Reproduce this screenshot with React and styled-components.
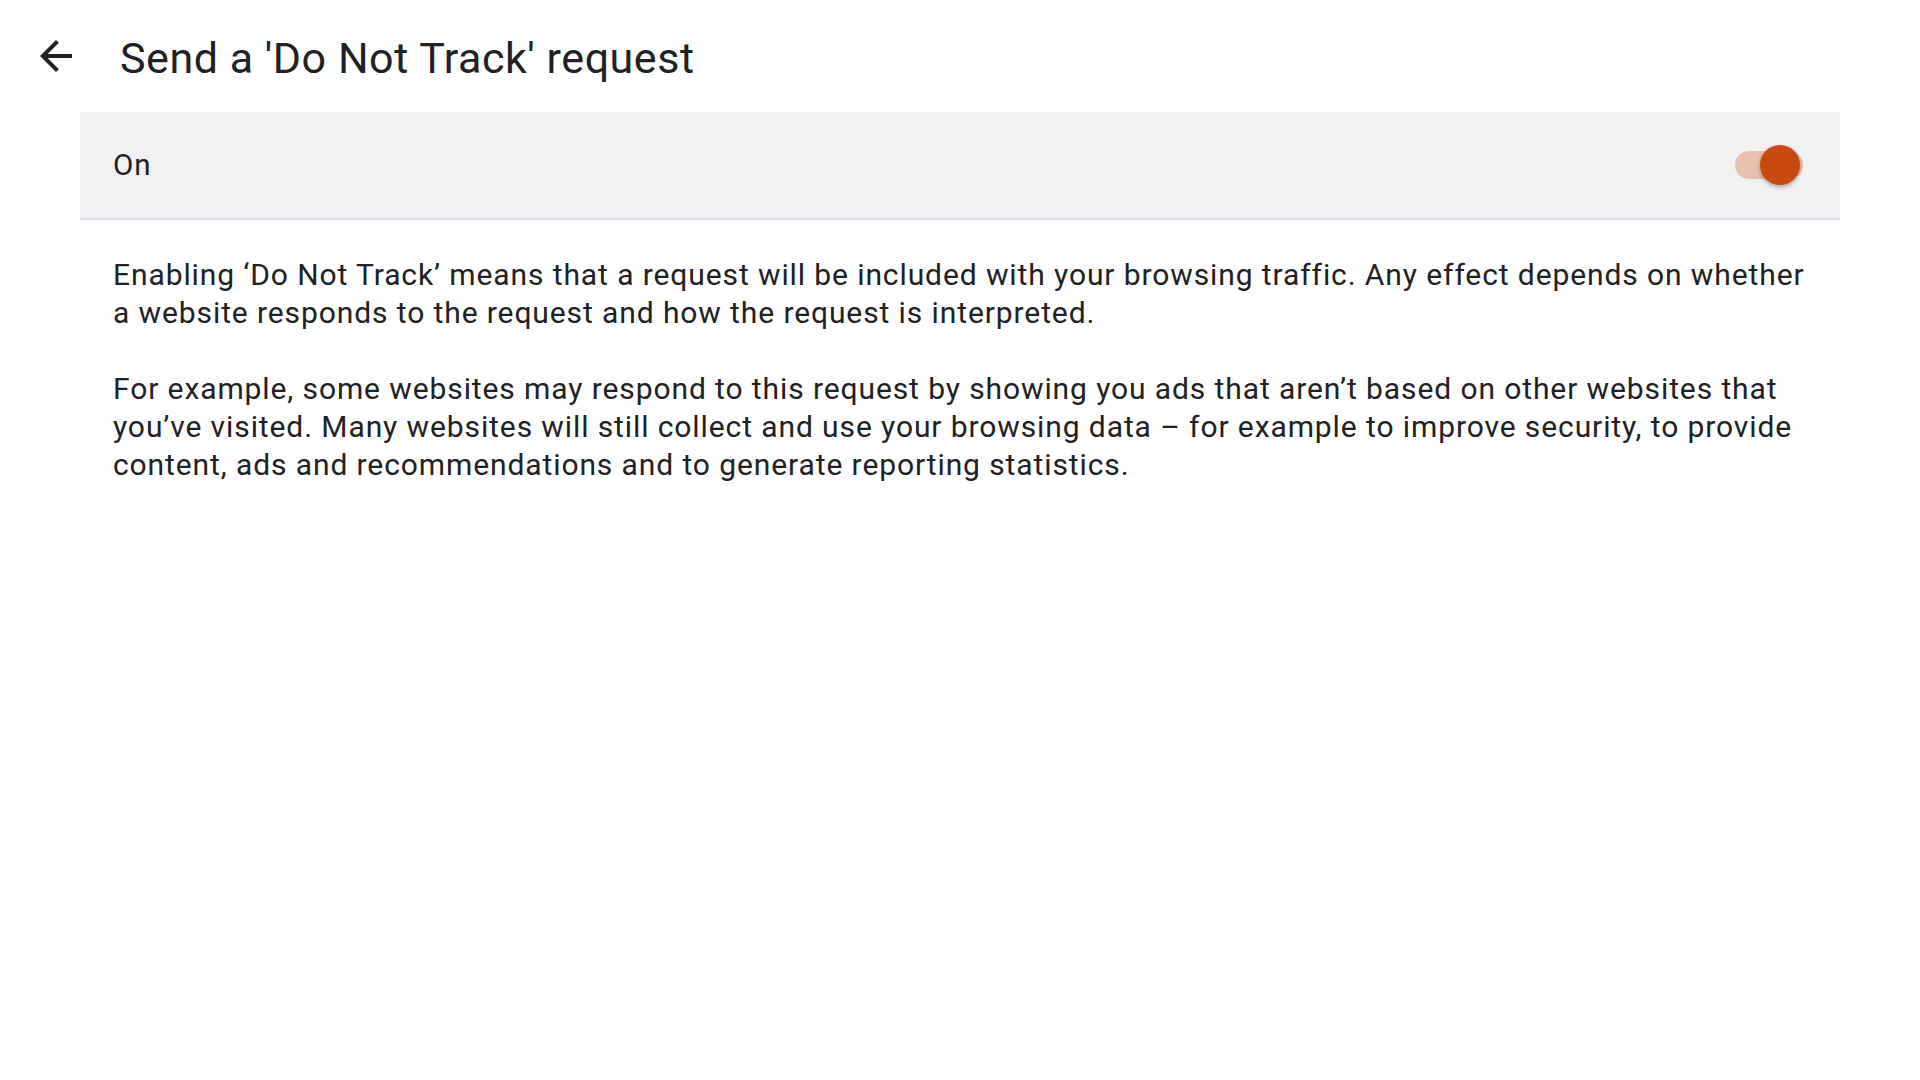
import React from "react";
import styled, { createGlobalStyle } from "styled-components";

const GlobalStyle = createGlobalStyle`
  html, body {
    margin: 0;
    padding: 0;
    background: #ffffff;
  }
  body {
    font-family: Roboto, "Noto Sans", "Liberation Sans", sans-serif;
    color: #202124;
  }
`;

const Page = styled.div`
  width: 1920px;
  min-height: 1080px;
  background: #ffffff;
`;

const Header = styled.header`
  display: flex;
  align-items: center;
  height: 112px;
  padding: 0 0 0 32px;
  box-sizing: border-box;
`;

const BackButton = styled.button`
  width: 48px;
  height: 48px;
  padding: 0;
  border: 0;
  background: none;
  display: flex;
  align-items: center;
  justify-content: center;
  color: #202124;
  cursor: pointer;
`;

const Title = styled.h1`
  margin: 5px 0 0 40px;
  font-size: 43px;
  font-weight: 400;
  letter-spacing: 0.0125em;
  color: #202124;
  line-height: 1;
`;

const Content = styled.main`
  padding: 0 80px;
`;

const SwitchRow = styled.label`
  display: flex;
  align-items: center;
  justify-content: space-between;
  height: 106px;
  padding: 0 37px 0 33px;
  background: #f1f1f1;
  border-bottom: 2px solid #dfe2ea;
  font-size: 29.5px;
  letter-spacing: 0.03em;
  color: #202124;
`;

const Track = styled.span`
  position: relative;
  display: block;
  width: 68px;
  height: 28px;
  border-radius: 14px;
  background: ${({ on }) => (on ? "#e8c0ae" : "#c4c4c4")};
`;

const Thumb = styled.span`
  position: absolute;
  top: -6px;
  left: ${({ on }) => (on ? "25px" : "-3px")};
  width: 40px;
  height: 40px;
  border-radius: 50%;
  background: ${({ on }) => (on ? "#c84a11" : "#fafafa")};
  box-shadow: 0 2px 4px rgba(0, 0, 0, 0.3);
`;

const Body = styled.div`
  padding: 36px 33px 0 33px;
  font-size: 30px;
  line-height: 38px;
  letter-spacing: 0.9px;
  color: #202124;
`;

const Paragraph = styled.p`
  margin: 0 0 38px 0;
`;

const ArrowBack = () => (
  <svg width="48" height="48" viewBox="0 0 24 24" fill="currentColor">
    <path d="M20 11H7.83l5.59-5.59L12 4l-8 8 8 8 1.41-1.41L7.83 13H20v-2z" />
  </svg>
);

const Switch = ({ on }) => (
  <Track on={on ? 1 : 0}>
    <Thumb on={on ? 1 : 0} />
  </Track>
);

export default function App() {
  return (
    <Page>
      <GlobalStyle />
      <Header>
        <BackButton aria-label="Back">
          <ArrowBack />
        </BackButton>
        <Title>Send a 'Do Not Track' request</Title>
      </Header>
      <Content>
        <SwitchRow>
          <span>On</span>
          <Switch on />
        </SwitchRow>
        <Body>
          <Paragraph>
            Enabling ‘Do Not Track’ means that a request will be included with your browsing
            traffic. Any effect depends on whether a website responds to the request and how the
            request is interpreted.
          </Paragraph>
          <Paragraph>
            For example, some websites may respond to this request by showing you ads that aren’t
            based on other websites that you’ve visited. Many websites will still collect and use
            your browsing data – for example to improve security, to provide content, ads and
            recommendations and to generate reporting statistics.
          </Paragraph>
        </Body>
      </Content>
    </Page>
  );
}
